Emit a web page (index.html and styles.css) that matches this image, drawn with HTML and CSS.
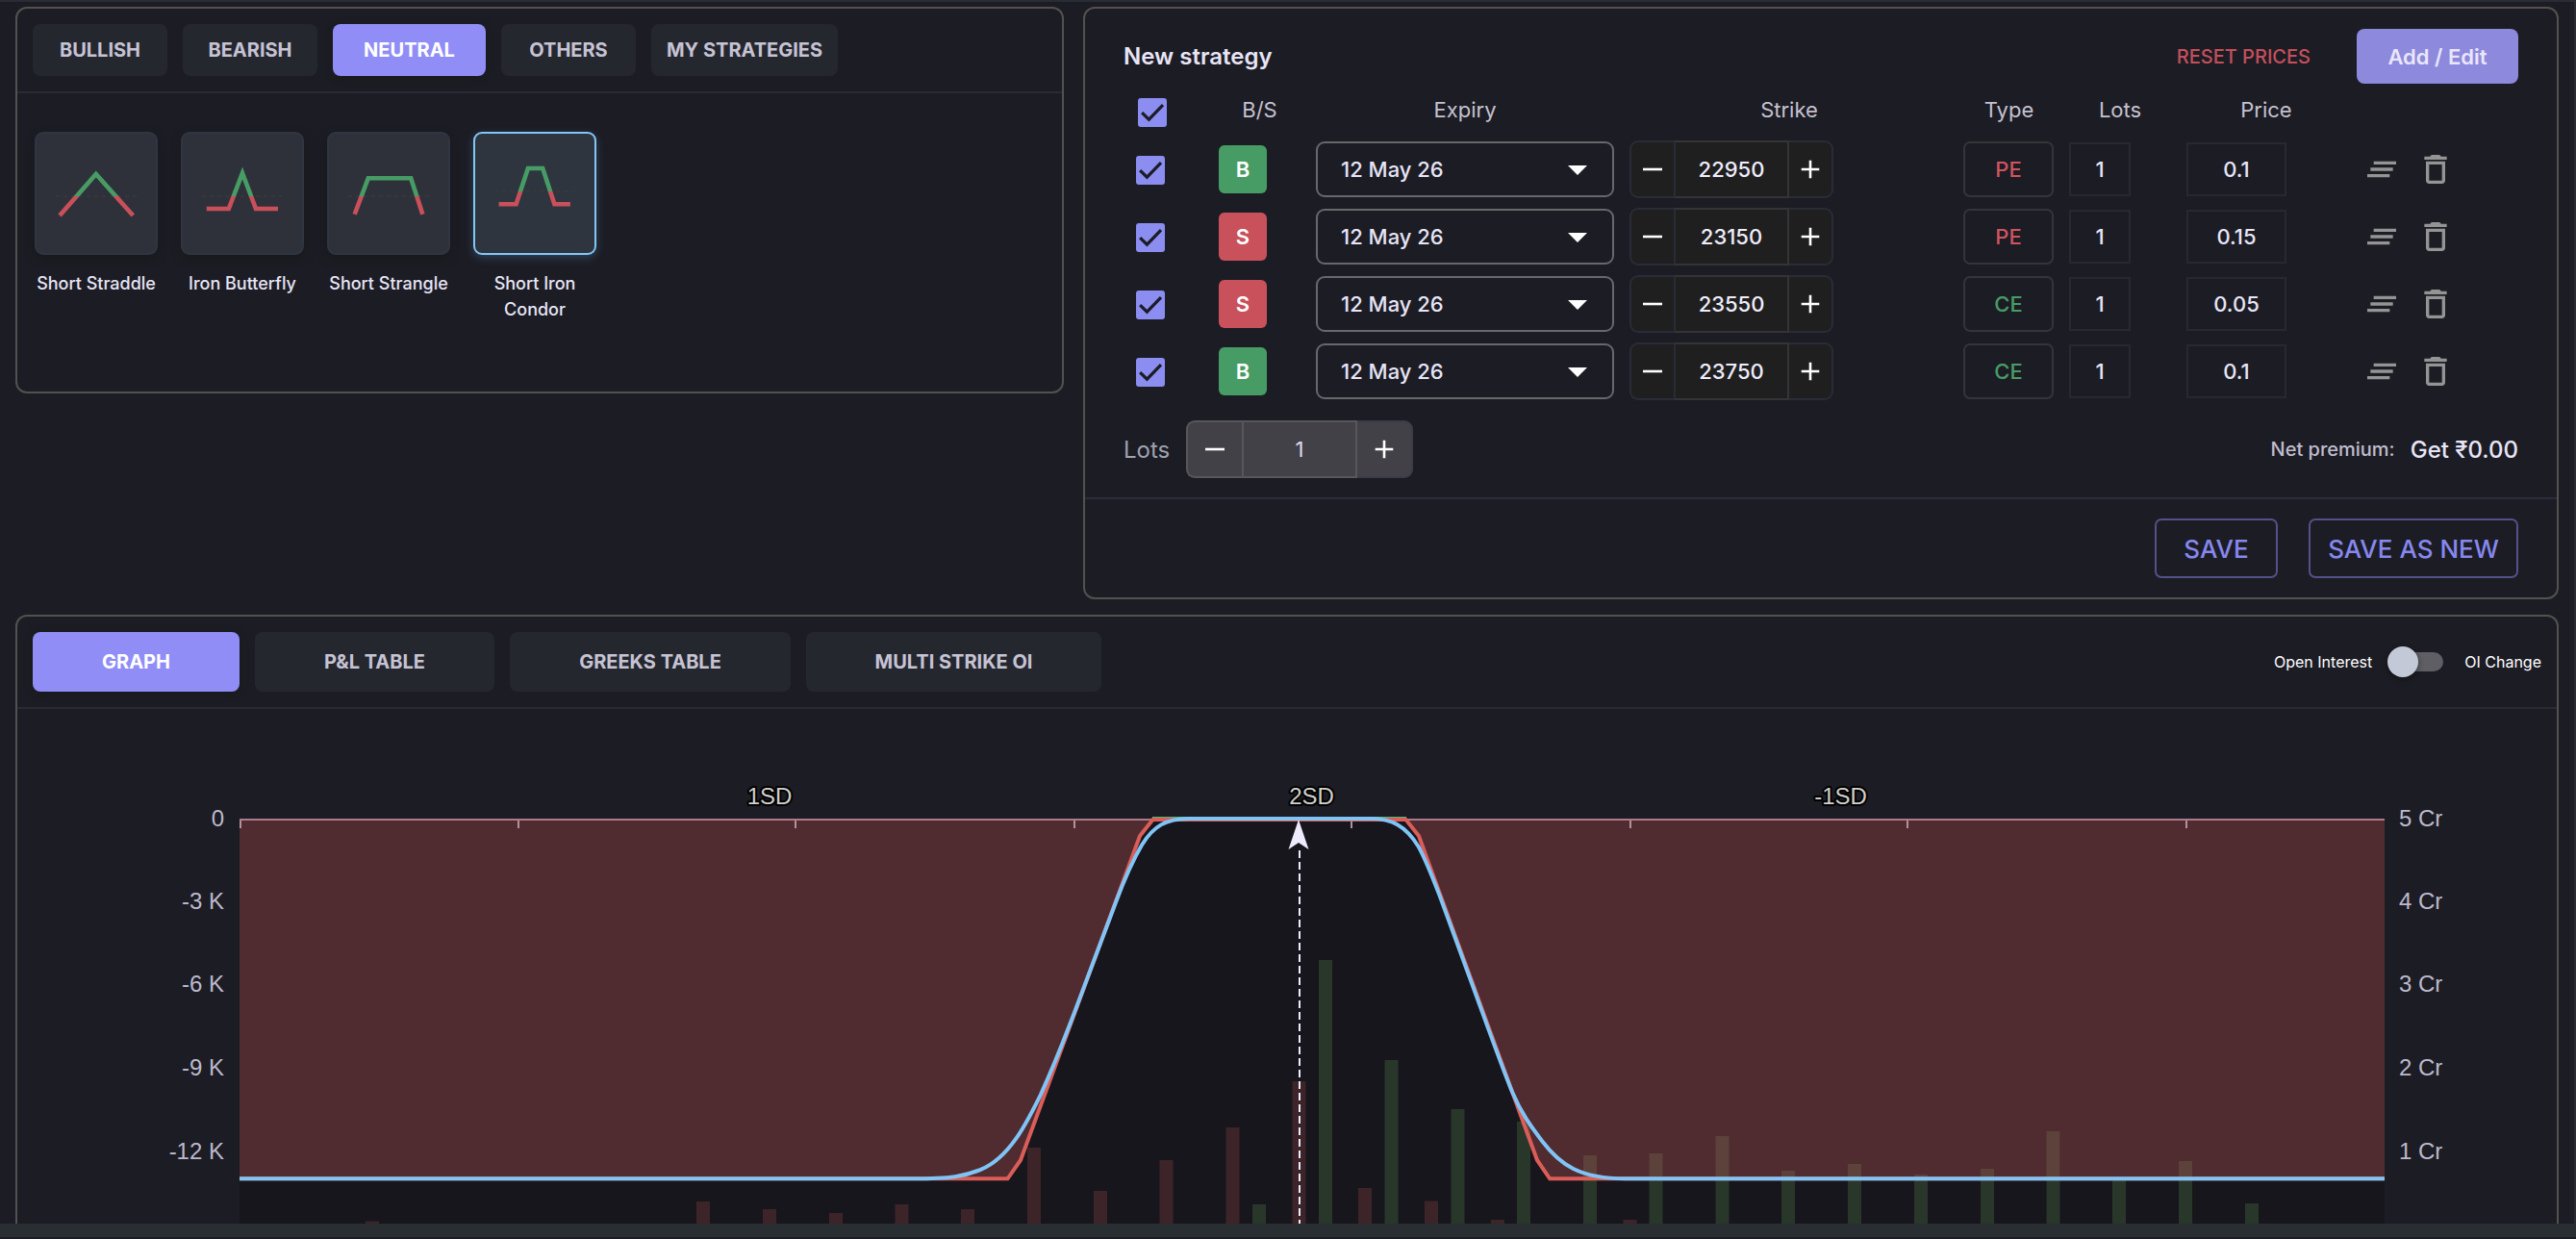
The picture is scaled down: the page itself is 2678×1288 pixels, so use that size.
FILE: index.html
```html
<!DOCTYPE html>
<html lang="en">
<head>
<meta charset="utf-8">
<title>Strategy builder</title>
<link rel="stylesheet" href="styles.css">
</head>
<body>
<svg class="defs" width="0" height="0" aria-hidden="true">
  <defs>
    <linearGradient id="pl" gradientUnits="userSpaceOnUse" x1="0" y1="139" x2="0" y2="269">
      <stop offset="0.5" stop-color="#479c65"/><stop offset="0.5" stop-color="#c9505b"/>
    </linearGradient>
    <linearGradient id="pl-high" gradientUnits="userSpaceOnUse" x1="0" y1="139" x2="0" y2="259">
      <stop offset="0.5" stop-color="#479c65"/><stop offset="0.5" stop-color="#c9505b"/>
    </linearGradient>
    <symbol id="check" viewBox="0 0 30 30"><path d="M4.2 15.2 11.4 22.2 26 7.2" fill="none" stroke="#1b1c25" stroke-width="3.2"/></symbol>
    <symbol id="caret" viewBox="0 0 20 10"><path d="M0 0h20L10 10z" fill="#fff"/></symbol>
    <symbol id="minus" viewBox="0 0 20 20"><path d="M0 10h20" stroke="#fff" stroke-width="2.6"/></symbol>
    <symbol id="plus" viewBox="0 0 20 20"><path d="M0.7 10h18.6M10 0.7v18.6" stroke="#fff" stroke-width="2.6"/></symbol>
    <symbol id="drag" viewBox="0 0 24 24"><path d="M5 13h14v-2H5v2zm-2 4h14v-2H3v2zM7 7v2h14V7H7z" fill="#949494"/></symbol>
    <symbol id="trash" viewBox="0 0 24 24"><path d="M6 19c0 1.1.9 2 2 2h8c1.1 0 2-.9 2-2V7H6v12zM8 9h8v10H8V9zm7.500-5-1-1h-5l-1 1H5v2h14V4h-3.500z" fill="#949494"/></symbol>
  </defs>
</svg>
<div class="page">
  <div class="top-line"></div>
  <main class="workspace">
    <div class="upper">
      <section class="panel picker">
        <nav class="tabs">
          <button class="tab w140">BULLISH</button>
          <button class="tab w140">BEARISH</button>
          <button class="tab w159 active">NEUTRAL</button>
          <button class="tab w140">OTHERS</button>
          <button class="tab w194">MY STRATEGIES</button>
        </nav>
        <div class="cards">
          <div class="card">
            <svg class="shape" viewBox="38 139 124 124"><path class="zero" d="M58 204h84"/><path d="M62.100 224 99.800 181 138.300 224" stroke="url(#pl)"/></svg>
            <span>Short Straddle</span>
          </div>
          <div class="card">
            <svg class="shape" viewBox="190 139 124 124"><path class="zero" d="M210 204h84"/><path d="M214.800 217H237.800L252 180 266 217H289" stroke="url(#pl)"/></svg>
            <span>Iron Butterfly</span>
          </div>
          <div class="card">
            <svg class="shape" viewBox="342 139 124 124"><path class="zero" d="M362 204h84"/><path d="M368.700 222.700 382.800 185.300H427.200L439.400 222.700" stroke="url(#pl)"/></svg>
            <span>Short Strangle</span>
          </div>
          <div class="card selected">
            <svg class="shape" viewBox="494 139 124 124"><path class="zero" d="M514 199h84"/><path d="M518.600 212.300H536.600L548.900 175H564.200L576.400 212.300H592.900" stroke="url(#pl-high)"/></svg>
            <span>Short Iron Condor</span>
          </div>
        </div>
      </section>

      <section class="panel builder">
        <div class="builder-body">
          <header class="builder-head">
            <h2>New strategy</h2>
            <button class="reset">RESET PRICES</button>
            <button class="add">Add / Edit</button>
          </header>
          <div class="leg-grid leg-head">
            <div class="c-check"><i class="box"><svg><use href="#check"/></svg></i></div>
            <div class="h-side">B/S</div>
            <div class="h-expiry">Expiry</div>
            <div class="h-strike">Strike</div>
            <div class="h-type">Type</div>
            <div class="h-lots">Lots</div>
            <div class="h-price">Price</div>
          </div>
          <div class="legs">
            <div class="leg-grid leg">
              <div class="c-check"><i class="box"><svg><use href="#check"/></svg></i></div>
              <div><b class="side buy">B</b></div>
              <div><div class="select">12 May 26<svg><use href="#caret"/></svg></div></div>
              <div><div class="stepper"><i><svg><use href="#minus"/></svg></i><span>22950</span><i><svg><use href="#plus"/></svg></i></div></div>
              <div><div class="type pe">PE</div></div>
              <div><div class="field lots">1</div></div>
              <div><div class="field price">0.1</div></div>
              <div class="actions"><svg><use href="#drag"/></svg><svg><use href="#trash"/></svg></div>
            </div>
            <div class="leg-grid leg">
              <div class="c-check"><i class="box"><svg><use href="#check"/></svg></i></div>
              <div><b class="side sell">S</b></div>
              <div><div class="select">12 May 26<svg><use href="#caret"/></svg></div></div>
              <div><div class="stepper"><i><svg><use href="#minus"/></svg></i><span>23150</span><i><svg><use href="#plus"/></svg></i></div></div>
              <div><div class="type pe">PE</div></div>
              <div><div class="field lots">1</div></div>
              <div><div class="field price">0.15</div></div>
              <div class="actions"><svg><use href="#drag"/></svg><svg><use href="#trash"/></svg></div>
            </div>
            <div class="leg-grid leg">
              <div class="c-check"><i class="box"><svg><use href="#check"/></svg></i></div>
              <div><b class="side sell">S</b></div>
              <div><div class="select">12 May 26<svg><use href="#caret"/></svg></div></div>
              <div><div class="stepper"><i><svg><use href="#minus"/></svg></i><span>23550</span><i><svg><use href="#plus"/></svg></i></div></div>
              <div><div class="type ce">CE</div></div>
              <div><div class="field lots">1</div></div>
              <div><div class="field price">0.05</div></div>
              <div class="actions"><svg><use href="#drag"/></svg><svg><use href="#trash"/></svg></div>
            </div>
            <div class="leg-grid leg">
              <div class="c-check"><i class="box"><svg><use href="#check"/></svg></i></div>
              <div><b class="side buy">B</b></div>
              <div><div class="select">12 May 26<svg><use href="#caret"/></svg></div></div>
              <div><div class="stepper"><i><svg><use href="#minus"/></svg></i><span>23750</span><i><svg><use href="#plus"/></svg></i></div></div>
              <div><div class="type ce">CE</div></div>
              <div><div class="field lots">1</div></div>
              <div><div class="field price">0.1</div></div>
              <div class="actions"><svg><use href="#drag"/></svg><svg><use href="#trash"/></svg></div>
            </div>
          </div>
          <div class="totals">
            <span class="totals-label">Lots</span>
            <div class="stepper big"><i><svg><use href="#minus"/></svg></i><span>1</span><i><svg><use href="#plus"/></svg></i></div>
            <span class="premium-label">Net premium:</span>
            <span class="premium">Get ₹0.00</span>
          </div>
        </div>
        <footer class="builder-foot">
          <button class="outline save">SAVE</button>
          <button class="outline save-new">SAVE AS NEW</button>
        </footer>
      </section>
    </div>

    <section class="panel analysis">
      <nav class="tabs tall">
        <button class="tab w215 active">GRAPH</button>
        <button class="tab w249">P&amp;L TABLE</button>
        <button class="tab w292">GREEKS TABLE</button>
        <button class="tab w307">MULTI STRIKE OI</button>
        <div class="oi-toggle">
          <span>Open Interest</span>
          <i class="switch"><i class="knob"></i></i>
          <span>OI Change</span>
        </div>
      </nav>
      <svg class="chart" viewBox="18 737 2640 535">
        <rect x="249" y="852" width="2230" height="440" fill="#17161c"/>
        <g fill="#3d2428">
          <rect x="380" y="1269.500" width="14" height="30"/><rect x="724" y="1249" width="14" height="30"/>
          <rect x="793" y="1257" width="14" height="30"/><rect x="862" y="1261" width="14" height="30"/>
          <rect x="930.500" y="1252" width="14" height="30"/><rect x="999" y="1257" width="14" height="30"/>
          <rect x="1068" y="1193" width="14" height="90"/><rect x="1137" y="1238" width="14" height="50"/>
          <rect x="1205.500" y="1206" width="14" height="80"/><rect x="1274.500" y="1172" width="14" height="110"/>
          <rect x="1343.500" y="1124" width="14" height="160"/><rect x="1412" y="1235" width="14" height="50"/>
          <rect x="1481" y="1248.500" width="14" height="40"/><rect x="1550" y="1268" width="14" height="20"/>
          <rect x="1687.500" y="1268" width="14" height="20"/>
        </g>
        <g fill="#29372a">
          <rect x="1302" y="1252" width="14" height="30"/><rect x="1371" y="998" width="14" height="290"/>
          <rect x="1439.500" y="1102" width="14" height="190"/><rect x="1508.500" y="1153" width="14" height="140"/>
          <rect x="1577" y="1166" width="14" height="120"/><rect x="1646" y="1201" width="14" height="90"/>
          <rect x="1714.500" y="1199" width="14" height="90"/><rect x="1783.500" y="1181" width="14" height="110"/>
          <rect x="1852" y="1217" width="14" height="70"/><rect x="1921" y="1210" width="14" height="80"/>
          <rect x="1990" y="1221" width="14" height="70"/><rect x="2059" y="1215" width="14" height="70"/>
          <rect x="2127.500" y="1176" width="14" height="110"/><rect x="2196" y="1226" width="14" height="60"/>
          <rect x="2265" y="1207" width="14" height="80"/><rect x="2334" y="1251" width="14" height="40"/>
        </g>
        <g fill="#d55c5f" fill-opacity=".3">
          <path d="M249 852H1198.500L1185 869 1061 1206 1047.500 1225.300H249z"/>
          <path d="M2479 852H1461.500L1475 869 1598 1206 1611.200 1225.300H2479z"/>
        </g>
        <path d="M249 852H2479" stroke="#ab7b89" stroke-width="2"/>
        <path d="M250 853v8M539 853v8M827 853v8M1117 853v8M1405 853v8M1695 853v8M1983 853v8M2273 853v8" stroke="#b3909c" stroke-width="2"/>
        <path d="M1198 850H1462" stroke="#55b877" stroke-width="2"/>
        <path class="payoff" d="M249 1225.300H1047.500L1061 1206 1185 869 1198.500 852H1461.500L1475 869 1598 1206 1611.200 1225.300H2479"/>
        <path class="today" d="M249 1225.300H950C988 1225.300 1003 1222.800 1020 1215.700C1050 1203 1068 1166 1081.700 1138.300C1101 1096 1110 1070 1116.800 1053L1160 938C1170 911 1179 892 1187.300 878C1199 859 1212 851 1236 851H1426C1446 851 1461 858 1474.600 880C1482 893 1490 914 1496.300 930L1530 1022C1545 1063 1559 1103 1572 1135C1582 1158 1591 1170 1603 1186C1622 1211 1642 1225.300 1690 1225.300H2479"/>
        <path d="M1351 884V1272" stroke="#eeeaff" stroke-width="2" stroke-dasharray="8 4"/>
        <path d="M1350 852 1360.500 883 1350 876 1339.500 883z" fill="#eeeaff"/>
        <g class="axis left"><text x="233" y="859">0</text><text x="233" y="945">-3 K</text><text x="233" y="1031">-6 K</text><text x="233" y="1118">-9 K</text><text x="233" y="1204.500">-12 K</text></g>
        <g class="axis"><text x="2494" y="859">5 Cr</text><text x="2494" y="945">4 Cr</text><text x="2494" y="1031">3 Cr</text><text x="2494" y="1118">2 Cr</text><text x="2494" y="1204.500">1 Cr</text></g>
        <g class="sd"><text x="800" y="836">1SD</text><text x="1363.500" y="836">2SD</text><text x="1913.500" y="836">-1SD</text></g>
      </svg>
    </section>
  </main>
  <div class="bottom-bar"></div>
</div>
</body>
</html>
```
FILE: styles.css
```css
* { box-sizing: border-box; }
body {
  margin: 0;
  background: #1c1c24;
  color: #e7e5f6;
  font-family: Inter, sans-serif;
  font-size: 22px;
}
button { font: inherit; border: 0; padding: 0; background: none; color: inherit; }
svg { display: block; }
.defs { position: absolute; }

.page { display: flex; flex-direction: column; width: 2678px; height: 1288px; overflow: hidden; background: #1c1c24; }
.top-line { flex: none; height: 2px; background: #292b35; }
.bottom-bar { flex: none; height: 14px; margin-bottom: 2px; background: #292e32; }
.workspace { flex: none; height: 1270px; overflow: hidden; padding: 5px 16px 0; border-right: 2px solid #292b33; }
.upper { display: flex; gap: 20px; align-items: flex-start; }
.panel { border: 2px solid #52514f; border-radius: 12px; }

/* tabs */
.tabs { display: flex; align-items: center; gap: 16px; padding: 16px; border-bottom: 2px solid #292a33; }
.tab { height: 54px; border-radius: 8px; background: #25272f; color: #c6c3d4; font-size: 20px; font-weight: 700; }
.tab.active { background: #908df6; color: #fff; box-shadow: 0 2px 8px rgba(20, 24, 16, .35); }
.tall .tab { height: 62px; }
.w140 { width: 140px; }
.w159 { width: 159px; }
.w194 { width: 194px; }
.w215 { width: 215px; }
.w249 { width: 249px; }
.w292 { width: 292px; }
.w307 { width: 307px; }

/* strategy picker */
.picker { width: 1090px; height: 402px; }
.cards { display: flex; gap: 24px; padding: 40px 18px; }
.card { width: 128px; text-align: center; font-size: 18px; font-weight: 500; line-height: 27px; }
.card span { display: block; margin: 16px -6px 0; padding: 0 6px; }
.shape { width: 128px; height: 128px; border: 2px solid #2f3542; border-radius: 9px; background: #2f313a; fill: none; stroke-width: 4.6; box-shadow: 0 4px 10px rgba(22, 24, 20, .5); }
.shape .zero { stroke: #35373b; stroke-width: 2; stroke-dasharray: 4 4; }
.selected .shape { border-color: #82c6f7; background: #2e353f; box-shadow: 0 3px 10px rgba(100, 170, 220, .28); }

/* strategy builder */
.builder { flex: 1; }
.builder-body { padding: 21px 40px 20px; border-bottom: 2px solid #292d3a; }
.builder-head { display: flex; align-items: center; height: 57px; }
.builder-head h2 { margin: 0 auto 0 0; font-size: 24px; font-weight: 600; }
.reset { margin-right: 48px; color: #c4505b; font-size: 20px; font-weight: 500; }
.add { width: 168px; height: 57px; border-radius: 8px; background: #8d89dc; color: #e9e6fb; font-weight: 600; }
.leg-grid { display: grid; grid-template-columns: 99px 101px 326px 347px 110px 122px 183px 1fr; align-items: center; }
.leg-head { height: 54px; margin-bottom: 5px; color: #c5c2d0; text-align: center; }
.leg-head .c-check { padding: 6px 0 0 15px; }
.h-side { width: 85px; }
.h-expiry { width: 310px; }
.h-strike { width: 332px; }
.h-type { width: 95px; }
.h-lots { width: 106px; }
.h-price { width: 166px; }
.legs { display: grid; gap: 10px; }
.leg { height: 60px; font-weight: 500; }
.leg .c-check { padding: 2px 0 0 13px; }
.box { display: block; width: 30px; height: 30px; border-radius: 3px; background: #8b8df1; }
.box svg { width: 30px; height: 30px; }
.side { display: block; width: 50px; border-radius: 6px; color: #fff; font-weight: 600; line-height: 50px; text-align: center; }
.buy { background: #479c65; }
.sell { background: #c9515c; }
.select { display: flex; align-items: center; justify-content: space-between; width: 310px; height: 58px; padding: 0 26px 0 24px; border: 2px solid #68676c; border-radius: 9px; }
.select svg { width: 20px; height: 10px; margin-top: 2px; }
.stepper { display: flex; width: 212px; height: 60px; color: #efedfb; }
.stepper i { display: flex; align-items: center; justify-content: center; width: 46px; border: 2px solid #292c37; background: #1f1f1f; }
.stepper i:first-child { border-right: 0; border-radius: 9px 0 0 9px; }
.stepper i:last-child { border-left: 0; border-radius: 0 9px 9px 0; }
.stepper span { flex: 1; border: 2px solid #343437; border-left-color: #292c37; background: #1f1f1f; line-height: 56px; text-align: center; }
.stepper svg { width: 20px; height: 20px; }
.type { width: 94px; height: 58px; border: 2px solid #343439; border-radius: 7px; line-height: 54px; text-align: center; }
.pe { color: #d0545f; }
.ce { color: #479c65; }
.field { height: 56px; border: 2px solid #28292f; line-height: 52px; text-align: center; }
.lots { width: 64px; }
.price { width: 104px; }
.actions { display: flex; gap: 16px; }
.actions svg { width: 40px; height: 40px; }

.totals { display: flex; align-items: center; height: 60px; margin-top: 21px; font-size: 24px; }
.totals-label { width: 65px; color: #9fa2b0; }
.big { width: 236px; margin-right: auto; font-size: 22px; }
.stepper.big i { width: 58px; background: #424147; border-color: #57565b; }
.stepper.big i:last-child { border-color: #3b3c48; }
.stepper.big span { background: #424147; border-color: #57565b; color: #ded9f0; }
.premium-label { margin-right: 16px; color: #c0bdcd; font-size: 20px; font-weight: 500; }
.premium { font-weight: 500; }
.builder-foot { display: flex; justify-content: flex-end; gap: 32px; padding: 20px 40px; }
.outline { height: 62px; border: 2px solid #535187; border-radius: 7px; color: #8688ee; font-size: 26px; font-weight: 500; }
.save { width: 128px; }
.save-new { width: 218px; }

/* analysis */
.analysis { margin-top: 16px; height: 700px; }
.oi-toggle { display: flex; align-items: center; margin-left: auto; font-size: 16px; color: #fff; }
.switch { display: block; width: 56px; height: 20px; margin: 0 22px 0 18px; border-radius: 10px; background: #5f5e64; }
.knob { display: block; width: 32px; height: 32px; margin-top: -6px; margin-left: -2px; border-radius: 50%; background: #c3c9d6; box-shadow: 0 2px 6px rgba(0, 0, 0, .4); }
.chart { width: 2640px; height: 535px; }
.payoff { fill: none; stroke: #da5d58; stroke-width: 4; }
.today { fill: none; stroke: #80c4f6; stroke-width: 4; }
.axis, .sd { font: 24px "Liberation Sans", sans-serif; }
.axis { fill: #bdb9cc; }
.left { text-anchor: end; }
.sd { fill: #d2d0cb; stroke: #000; stroke-width: 4; stroke-linejoin: round; paint-order: stroke; text-anchor: middle; }
```
